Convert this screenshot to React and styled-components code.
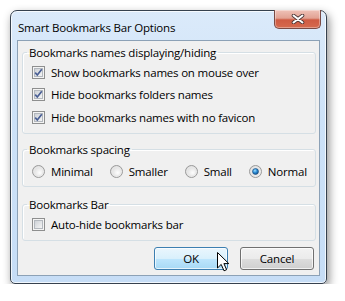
import React from "react";
import styled, { createGlobalStyle } from "styled-components";

const GlobalStyle = createGlobalStyle`
  html, body {
    margin: 0;
    padding: 0;
    background: #ffffff;
  }
  body {
    font-family: "Open Sans", "Noto Sans", "Liberation Sans", sans-serif;
    font-size: 11.5px;
    letter-spacing: -0.2px;
    color: #000;
  }
`;

const Page = styled.div`
  padding: 10px 0 0 10px;
`;

const Window = styled.div`
  box-sizing: border-box;
  width: 317px;
  height: 274px;
  display: flex;
  flex-direction: column;
  padding: 0 6px 7px 6px;
  border: 1px solid #36414e;
  border-radius: 7px 7px 5px 5px;
  background: linear-gradient(#dbeafa 0%, #cde2f8 40%, #c6ddf6 100%);
  box-shadow: inset 0 0 0 1px rgba(255, 255, 255, 0.75),
    2px 4px 10px rgba(0, 0, 0, 0.45);
`;

const TitleBar = styled.div`
  height: 29px;
  flex: none;
  display: flex;
  align-items: flex-start;
  justify-content: space-between;
`;

const Title = styled.div`
  padding: 9px 0 0 1px;
  line-height: 16px;
`;

const CloseButton = styled.div`
  width: 47px;
  height: 19px;
  margin: -1px -1px 0 0;
  box-sizing: border-box;
  border: 1px solid #7a4a44;
  border-top: none;
  border-radius: 0 0 5px 5px;
  background: linear-gradient(#efc2b8 0%, #e2a293 45%, #cf5b43 55%, #d56a4e 100%);
  box-shadow: inset 0 0 0 1px rgba(255, 255, 255, 0.35);
  display: flex;
  align-items: center;
  justify-content: center;
`;

const Client = styled.div`
  flex: 1;
  display: flex;
  flex-direction: column;
  background: #f0f0f0;
  border: 1px solid #8ca1b6;
  padding: 4px 3px 0 4px;
`;

const Group = styled.fieldset`
  margin: ${(p) => p.$top}px 0 0 0;
  padding: ${(p) => p.$padTop}px 4px ${(p) => p.$padBottom}px 4px;
  border: 1px solid #d5dfe5;
  border-radius: 3px;
  min-width: 0;
  box-shadow: inset 1px 1px 0 #fff;
`;

const Legend = styled.legend`
  padding: 0 2px;
  line-height: 15px;
`;

const Row = styled.label`
  display: flex;
  align-items: center;
  gap: 6px;
  height: ${(p) => p.$h || 22}px;
  padding-left: 5px;
`;

const RadioRow = styled.div`
  display: flex;
  align-items: center;
  gap: 17px;
  height: 22px;
  padding-left: 5px;
`;

const RadioItem = styled.label`
  display: flex;
  align-items: center;
  gap: 6px;
`;

const ButtonBar = styled.div`
  display: flex;
  justify-content: flex-end;
  gap: 12px;
  margin-top: 6px;
  padding-right: 2px;
`;

const Button = styled.div`
  position: relative;
  box-sizing: border-box;
  width: 74px;
  height: 23px;
  border-radius: 3px;
  display: flex;
  align-items: center;
  justify-content: center;
  border: 1px solid ${(p) => (p.$hot ? "#3c7fb1" : "#707070")};
  background: ${(p) =>
    p.$hot
      ? "linear-gradient(#eaf6fd 0%, #d9f0fc 50%, #bee6fd 51%, #a7d9f5 100%)"
      : "linear-gradient(#f2f2f2 0%, #ebebeb 50%, #dddddd 51%, #cfcfcf 100%)"};
  box-shadow: inset 0 0 0 1px rgba(255, 255, 255, 0.7);
`;

const Cursor = styled.svg`
  position: absolute;
  left: 62px;
  top: 4px;
`;

const CheckBox = ({ checked }) => (
  <svg width="13" height="13" viewBox="0 0 13 13">
    <defs>
      <linearGradient id="cbg" x1="0" y1="0" x2="1" y2="1">
        <stop offset="0" stopColor="#cbcfd5" />
        <stop offset="1" stopColor="#f7f7f7" />
      </linearGradient>
    </defs>
    <rect x="0.5" y="0.5" width="12" height="12" fill="#f4f4f4" stroke="#8e8f8f" />
    <rect x="2.5" y="2.5" width="8" height="8" fill="url(#cbg)" stroke="#b3b8be" />
    {checked && (
      <path
        d="M3.2 6.6 L5.3 9 L9.8 3.2"
        fill="none"
        stroke="#4a5f95"
        strokeWidth="1.7"
      />
    )}
  </svg>
);

const Radio = ({ checked }) => (
  <svg width="13" height="13" viewBox="0 0 13 13">
    <defs>
      <radialGradient id="rbg" cx="0.6" cy="0.6" r="0.7">
        <stop offset="0" stopColor="#fdfdfd" />
        <stop offset="1" stopColor="#d4d4d4" />
      </radialGradient>
      <radialGradient id="rdot" cx="0.4" cy="0.35" r="0.7">
        <stop offset="0" stopColor="#9fe1ff" />
        <stop offset="0.5" stopColor="#2a8ad4" />
        <stop offset="1" stopColor="#0d4a84" />
      </radialGradient>
    </defs>
    <circle cx="6.5" cy="6.5" r="6" fill="url(#rbg)" stroke="#9a9a9a" />
    <circle cx="6.5" cy="6.5" r="4.5" fill="none" stroke="#e9e9e9" />
    {checked && <circle cx="6.5" cy="6.5" r="3" fill="url(#rdot)" stroke="#1d4c7a" strokeWidth="0.6" />}
  </svg>
);

export default function App() {
  return (
    <>
      <GlobalStyle />
      <Page>
        <Window>
          <TitleBar>
            <Title>Smart Bookmarks Bar Options</Title>
            <CloseButton>
              <svg width="14" height="10" viewBox="0 0 14 10">
                <path
                  d="M2.5 1.5 L11.5 8.5 M11.5 1.5 L2.5 8.5"
                  stroke="#4a3535"
                  strokeWidth="3.6"
                  strokeLinecap="round"
                />
                <path
                  d="M2.5 1.5 L11.5 8.5 M11.5 1.5 L2.5 8.5"
                  stroke="#ffffff"
                  strokeWidth="2"
                  strokeLinecap="round"
                />
              </svg>
            </CloseButton>
          </TitleBar>
          <Client>
            <Group $top={0} $padTop={1} $padBottom={5}>
              <Legend>Bookmarks names displaying/hiding</Legend>
              <Row>
                <CheckBox checked />
                Show bookmarks names on mouse over
              </Row>
              <Row $h={23}>
                <CheckBox checked />
                Hide bookmarks folders names
              </Row>
              <Row>
                <CheckBox checked />
                Hide bookmarks names with no favicon
              </Row>
            </Group>
            <Group $top={8} $padTop={3} $padBottom={4}>
              <Legend>Bookmarks spacing</Legend>
              <RadioRow>
                <RadioItem>
                  <Radio />
                  Minimal
                </RadioItem>
                <RadioItem>
                  <Radio />
                  Smaller
                </RadioItem>
                <RadioItem>
                  <Radio />
                  Small
                </RadioItem>
                <RadioItem>
                  <Radio checked />
                  Normal
                </RadioItem>
              </RadioRow>
            </Group>
            <Group $top={10} $padTop={1} $padBottom={5}>
              <Legend>Bookmarks Bar</Legend>
              <Row>
                <CheckBox />
                Auto-hide bookmarks bar
              </Row>
            </Group>
            <ButtonBar>
              <Button $hot>
                OK
                <Cursor width="13" height="20" viewBox="0 0 13 20">
                  <path
                    d="M0.5 0.5 V16 L4.2 12.4 L7 18.8 L9.6 17.7 L6.9 11.6 H11.8 Z"
                    fill="#ffffff"
                    stroke="#000000"
                    strokeWidth="1"
                    strokeLinejoin="miter"
                  />
                </Cursor>
              </Button>
              <Button>Cancel</Button>
            </ButtonBar>
          </Client>
        </Window>
      </Page>
    </>
  );
}
